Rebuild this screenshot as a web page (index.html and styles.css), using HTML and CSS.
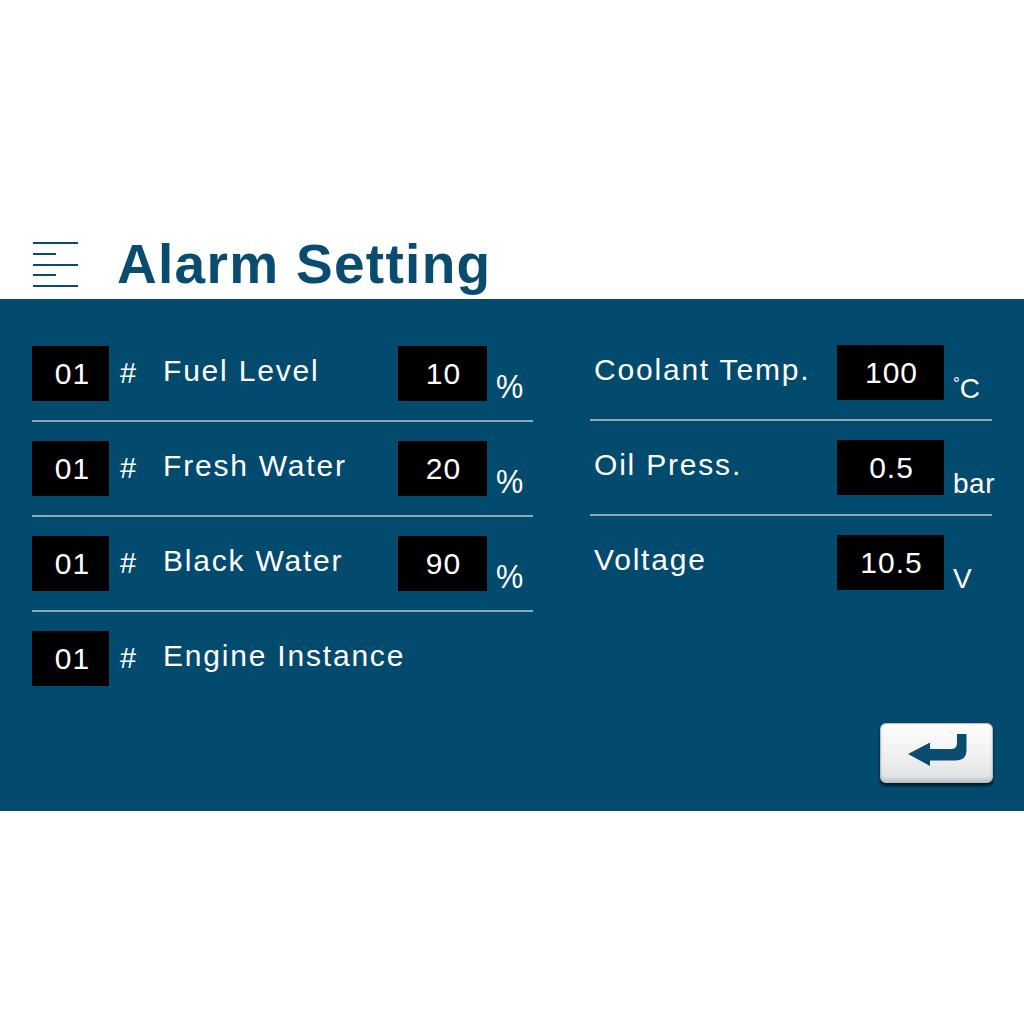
FILE: index.html
```html
<!DOCTYPE html>
<html>
<head>
<meta charset="utf-8">
<link rel="stylesheet" href="styles.css">
</head>
<body>
<header class="header">
  <svg class="menu-icon" width="46" height="46" viewBox="0 0 46 46">
    <g fill="#0a4b70">
      <rect x="0" y="0" width="45" height="2"/>
      <rect x="0" y="11" width="23" height="2"/>
      <rect x="0" y="22" width="45" height="2"/>
      <rect x="0" y="32" width="23" height="2"/>
      <rect x="0" y="43" width="45" height="2"/>
    </g>
  </svg>
  <h1 class="title">Alarm Setting</h1>
</header>
<main class="panel">
  <div class="grid">
    <div class="col col-left">
      <div class="row">
        <span class="box box-id">01</span>
        <span class="hash">#</span>
        <span class="label label-left">Fuel Level</span>
        <span class="box box-val">10</span>
        <span class="unit unit-pct">%</span>
      </div>
      <div class="row">
        <span class="box box-id">01</span>
        <span class="hash">#</span>
        <span class="label label-left">Fresh Water</span>
        <span class="box box-val">20</span>
        <span class="unit unit-pct">%</span>
      </div>
      <div class="row">
        <span class="box box-id">01</span>
        <span class="hash">#</span>
        <span class="label label-left">Black Water</span>
        <span class="box box-val">90</span>
        <span class="unit unit-pct">%</span>
      </div>
      <div class="row row-last">
        <span class="box box-id">01</span>
        <span class="hash">#</span>
        <span class="label">Engine Instance</span>
      </div>
    </div>
    <div class="col col-right">
      <div class="row">
        <span class="label label-right">Coolant Temp.</span>
        <span class="box box-val-r">100</span>
        <span class="unit unit-r"><span class="deg">°</span>C</span>
      </div>
      <div class="row">
        <span class="label label-right">Oil Press.</span>
        <span class="box box-val-r">0.5</span>
        <span class="unit unit-r">bar</span>
      </div>
      <div class="row row-last">
        <span class="label label-right">Voltage</span>
        <span class="box box-val-r">10.5</span>
        <span class="unit unit-r">V</span>
      </div>
    </div>
  </div>
  <div class="footer">
    <button class="enter-btn" type="button" aria-label="Enter">
      <svg width="113" height="60" viewBox="0 0 113 60">
        <path d="M28,31 L50,19.5 L50,26 L71,26 Q77,26 77,20 L77,11 L86.5,11 L86.5,27 Q86.5,37.5 75,37.5 L50,37.5 L50,43 Z" fill="#0a4b70"/>
      </svg>
    </button>
  </div>
</main>
</body>
</html>
```

FILE: styles.css
```css
html, body {
  margin: 0;
  padding: 0;
  background: #ffffff;
}

body {
  font-family: "Liberation Sans", Arial, sans-serif;
  width: 1024px;
  height: 1024px;
  overflow: hidden;
}

.header {
  display: flex;
  align-items: flex-start;
  padding: 232px 0 3px 33px;
  height: 64px;
}

.menu-icon {
  display: block;
  margin-top: 10px;
  flex: none;
}

.title {
  margin: 0 0 0 38px;
  font-size: 55px;
  line-height: 64px;
  font-weight: bold;
  letter-spacing: 1.3px;
  color: #0a4b70;
}

.panel {
  background: #024a6e;
  height: 512px;
  box-sizing: border-box;
  padding: 47px 32px 0 32px;
  color: #ffffff;
}

.grid {
  display: grid;
  grid-template-columns: 501px 402px;
  column-gap: 57px;
  align-items: start;
}

.col-right {
  margin-top: -1px;
}

.row {
  display: flex;
  align-items: center;
  height: 55px;
  padding-bottom: 19px;
  margin-bottom: 19px;
  border-bottom: 2px solid #8ea7b8;
}

.row-last {
  padding-bottom: 0;
  margin-bottom: 0;
  border-bottom: none;
}

.box {
  display: flex;
  align-items: center;
  justify-content: center;
  height: 55px;
  background: #000000;
  font-size: 30px;
  letter-spacing: 1px;
  box-sizing: border-box;
  flex: none;
}

.box-id {
  width: 77px;
  padding-left: 4px;
}

.box-val {
  width: 89px;
  padding-left: 2px;
}

.box-val-r {
  width: 107px;
  padding-left: 2px;
}

.hash {
  width: 43px;
  margin-left: 11px;
  font-size: 29px;
  flex: none;
}

.label {
  font-size: 30px;
  letter-spacing: 1.8px;
  padding-bottom: 5px;
  white-space: nowrap;
}

.label-left {
  width: 235px;
  flex: none;
}

.label-right {
  width: 243px;
  padding-left: 4px;
  flex: none;
}

.unit {
  align-self: flex-end;
  white-space: nowrap;
}

.unit-pct {
  font-size: 34px;
  line-height: 34px;
  margin-left: 9px;
  margin-bottom: -2px;
  transform: scaleX(0.9);
  transform-origin: left bottom;
}

.unit-r {
  font-size: 28px;
  line-height: 28px;
  margin-left: 9px;
  margin-bottom: -3px;
  letter-spacing: 0.5px;
}

.deg {
  font-size: 17px;
  vertical-align: top;
  line-height: 17px;
  letter-spacing: 0;
}

.footer {
  display: flex;
  justify-content: flex-end;
  margin-top: 37px;
  margin-right: -1px;
}

.enter-btn {
  display: block;
  width: 113px;
  height: 60px;
  padding: 0;
  border: 1px solid #b9bcc0;
  border-radius: 6px;
  background: linear-gradient(#fdfdfd 0%, #f0f0f0 55%, #dedfe1 100%);
  box-shadow: 0 3px 3px rgba(0, 0, 0, 0.65), inset 0 -3px 3px rgba(0, 0, 0, 0.12);
  cursor: pointer;
  box-sizing: border-box;
}

.enter-btn svg {
  display: block;
  margin: -1px;
}
```
